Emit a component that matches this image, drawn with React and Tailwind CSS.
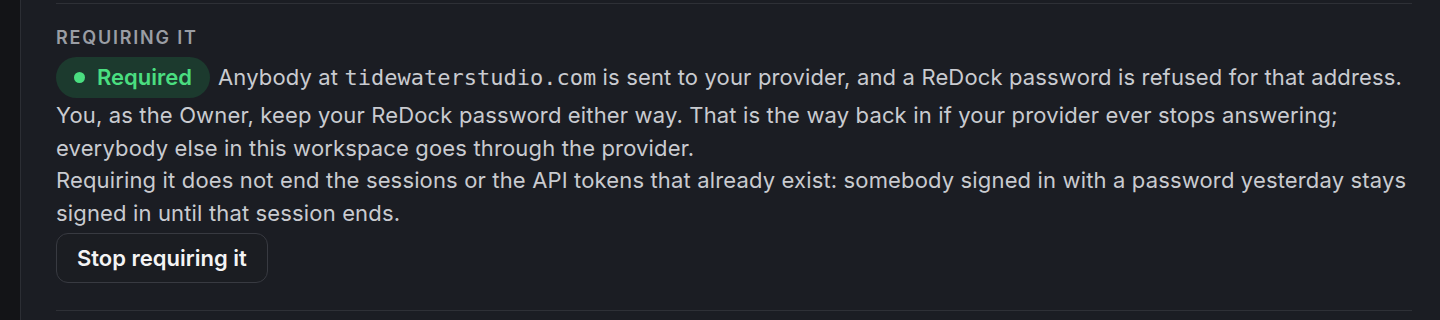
export default function App() {
  return (
    <div className="flex min-h-[320px] w-full bg-[#1b1d23] font-['Inter',sans-serif]">
      <div className="w-[21px] shrink-0 border-r border-[#2c2e34] bg-[#131417]" />
      <div className="flex-1 pl-[35px] pr-[28px] pt-[3px]">
        <section className="border-y border-[#2e3036] pt-[22px] pb-[27px]">
          <h4 className="text-[18px] font-semibold uppercase leading-6 tracking-[0.1em] text-[#9a9da4]">
            Requiring it
          </h4>
          <div className="mt-[7px] flex items-center gap-2 text-[22px] leading-[32.5px] tracking-[0.15px] text-[#c9cbd0]">
            <span className="inline-flex h-[41px] items-center gap-[12px] rounded-full bg-[#1c3a2e] px-[18px] font-semibold tracking-normal text-[#4ade80]">
              <span className="size-[11px] rounded-full bg-[#4ade80]" />
              Required
            </span>
            <p>
              Anybody at{' '}
              <code className="font-['DejaVu_Sans_Mono',monospace] text-[22px] tracking-normal">tidewaterstudio.com</code>{' '}
              is sent to your provider, and a ReDock password is refused for that address.
            </p>
          </div>
          <p className="mt-px text-[22px] leading-[32.5px] tracking-[0.15px] text-[#c9cbd0]">
            You, as the Owner, keep your ReDock password either way. That is the way back in if your provider ever
            stops answering; everybody else in this workspace goes through the provider.
          </p>
          <p className="text-[22px] leading-[32.5px] tracking-[0.15px] text-[#c9cbd0]">
            Requiring it does not end the sessions or the API tokens that already exist: somebody signed in with a
            password yesterday stays signed in until that session ends.
          </p>
          <button className="mt-1 h-[50px] rounded-[12px] border border-[#383a41] bg-[#1b1d22] px-5 text-[22px] font-semibold text-[#f4f4f5]">
            Stop requiring it
          </button>
        </section>
      </div>
    </div>
  );
}
